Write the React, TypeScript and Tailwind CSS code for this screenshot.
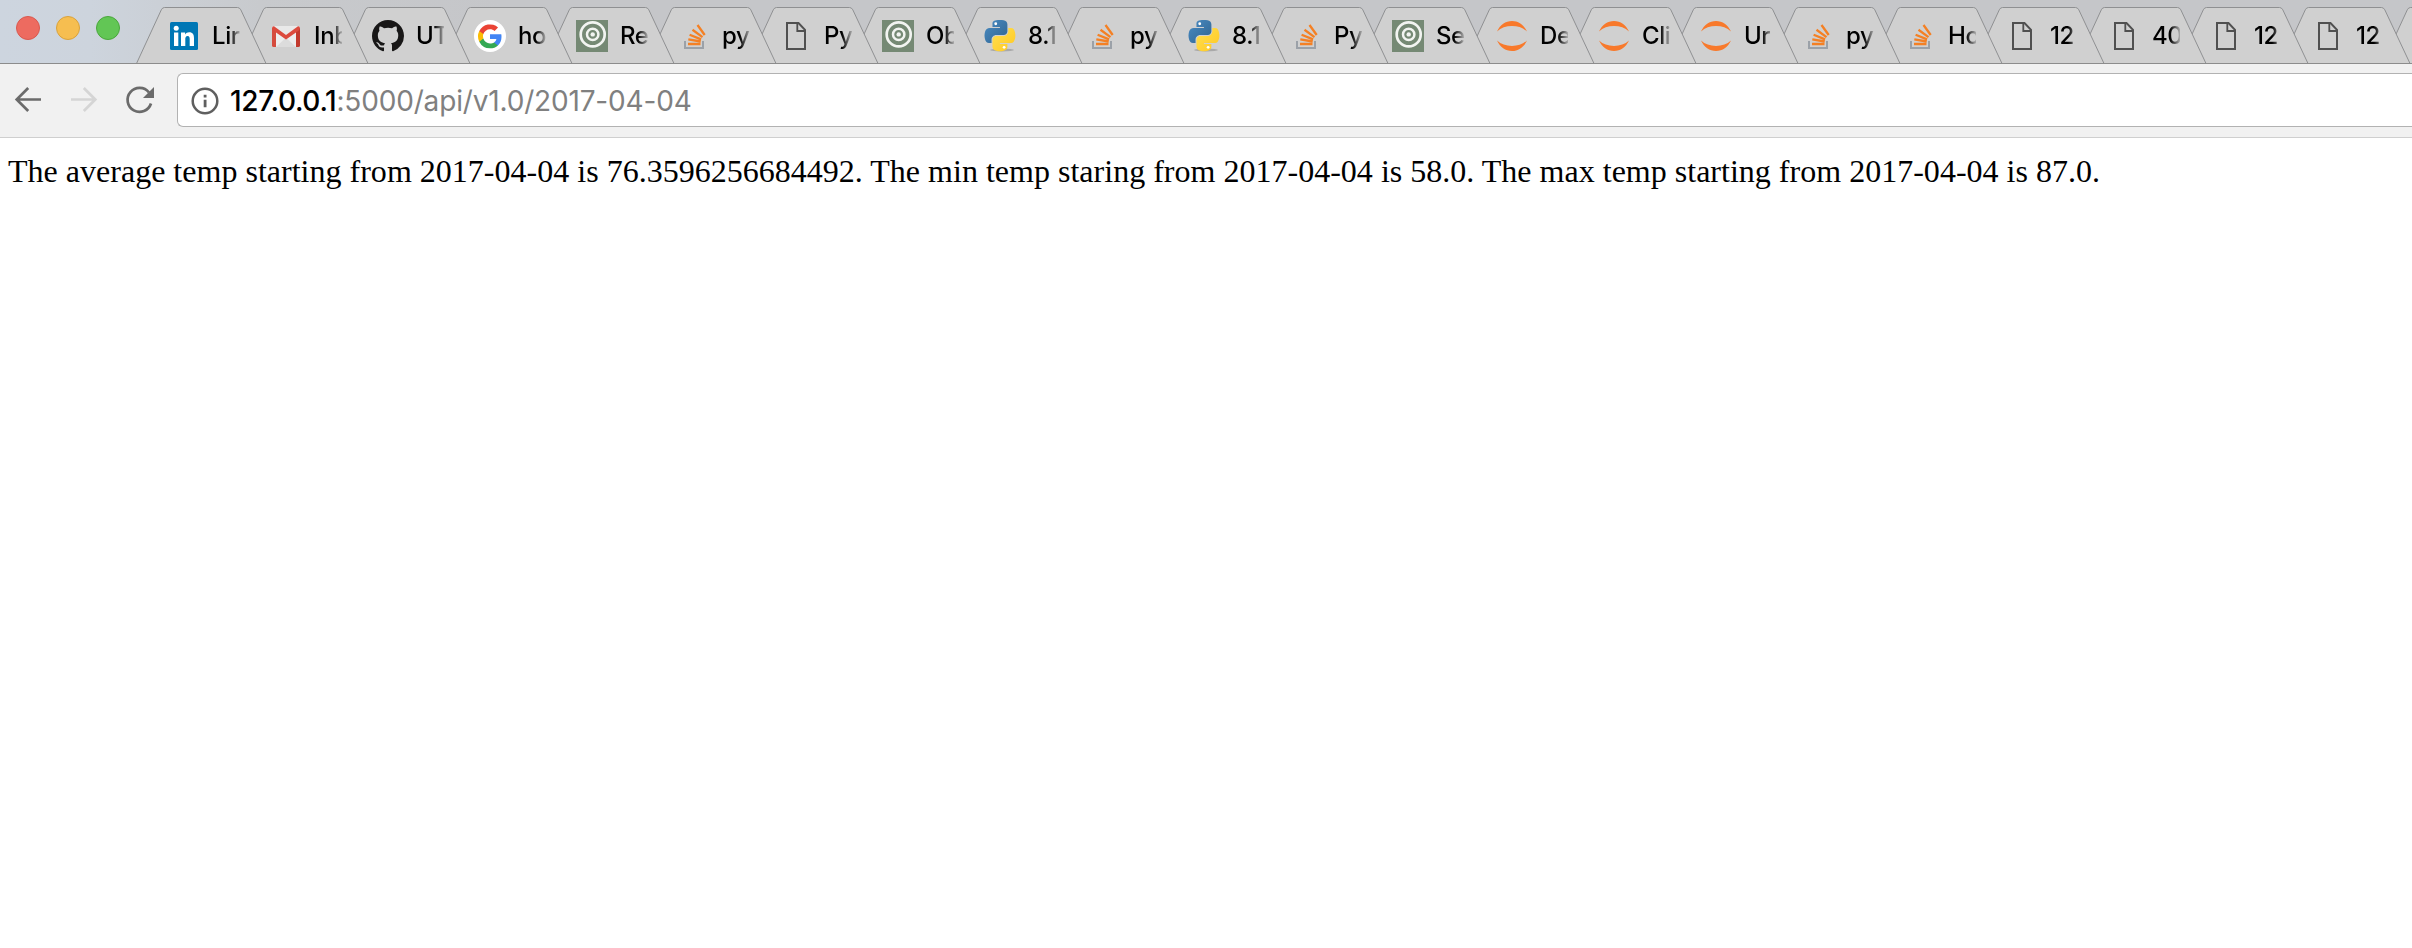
import React from "react";

type IconKind = "linkedin" | "gmail" | "github" | "google" | "rings" | "stack" | "file" | "python" | "jupyter";

const tabs: { icon: IconKind; label: string }[] = [
  { icon: "linkedin", label: "Lir" },
  { icon: "gmail", label: "Inb" },
  { icon: "github", label: "UT" },
  { icon: "google", label: "ho" },
  { icon: "rings", label: "Re" },
  { icon: "stack", label: "py" },
  { icon: "file", label: "Py" },
  { icon: "rings", label: "Ob" },
  { icon: "python", label: "8.1" },
  { icon: "stack", label: "py" },
  { icon: "python", label: "8.1" },
  { icon: "stack", label: "Py" },
  { icon: "rings", label: "Se" },
  { icon: "jupyter", label: "De" },
  { icon: "jupyter", label: "Cli" },
  { icon: "jupyter", label: "Ur" },
  { icon: "stack", label: "py" },
  { icon: "stack", label: "Ho" },
  { icon: "file", label: "12" },
  { icon: "file", label: "40" },
  { icon: "file", label: "12" },
  { icon: "file", label: "12" },
];

function TabIcon({ kind }: { kind: IconKind }) {
  const cls = "block size-8 shrink-0";
  switch (kind) {
    case "linkedin":
      return (
        <svg className={cls} viewBox="0 0 32 32">
          <rect x="2" y="2" width="28" height="28" rx="1.5" fill="#0077b5" />
          <circle cx="8.2" cy="8.3" r="2.5" fill="#fff" />
          <path d="M6 12.5h4.3V26H6zM13 12.5h4.1v1.9c.9-1.5 2.3-2.2 4-2.2 3.9 0 4.9 2.5 4.9 6V26h-4.3v-6.900c0-1.800-.3-3.200-2.100-3.200s-2.300 1.300-2.300 3.200V26H13z" fill="#fff" />
        </svg>
      );
    case "gmail":
      return (
        <svg className={cls} viewBox="0 0 32 32">
          <rect x="2" y="6" width="28" height="21" rx="1.5" fill="#e9e9e9" />
          <path d="M6 27 16 17l10 10z" fill="#dcdcdc" />
          <path d="M6 10v17l10-9 10 9V10l-10 8z" fill="#f1f1f1" opacity=".5" />
          <path d="M2 8h4v19H3.500Q2 27 2 25.500z" fill="#d54b3d" />
          <path d="M26 8h4v17.500Q30 27 28.500 27H26z" fill="#c23a2e" />
          <path d="M2 8.500Q2 6 4 6.200L16 15 28 6.200q2-.2 2 2.300L28.800 10.500 16 19.500 3.200 10.500z" fill="#dc4a3d" />
        </svg>
      );
    case "github":
      return (
        <svg className={cls} viewBox="0 0 16 16">
          <path fill="#181717" d="M8 0C3.580 0 0 3.580 0 8c0 3.540 2.290 6.530 5.470 7.590.4.070.55-.17.55-.38 0-.19-.01-.82-.01-1.490-2.010.37-2.530-.49-2.690-.94-.09-.23-.48-.94-.82-1.130-.28-.15-.68-.52-.01-.53.63-.01 1.080.58 1.230.82.72 1.210 1.870.87 2.330.66.070-.52.28-.87.51-1.070-1.780-.2-3.640-.89-3.640-3.950 0-.87.31-1.590.82-2.150-.080-.2-.36-1.020.08-2.120 0 0 .67-.21 2.200.82.64-.18 1.320-.27 2-.27s1.360.09 2 .27c1.530-1.040 2.200-.82 2.200-.82.44 1.100.16 1.920.08 2.120.51.56.82 1.270.82 2.150 0 3.070-1.870 3.750-3.650 3.950.29.25.54.73.54 1.480 0 1.070-.01 1.930-.01 2.200 0 .21.15.46.55.38A8.010 8.010 0 0 0 16 8c0-4.420-3.580-8-8-8" />
        </svg>
      );
    case "google":
      return (
        <svg className={cls} viewBox="0 0 32 32">
          <circle cx="16" cy="16" r="16" fill="#fff" />
          <g transform="translate(4 4.400)">
            <path fill="#4285F4" d="M23.500 12.270c0-.81-.07-1.600-.21-2.350H12v4.600h6.450a5.520 5.520 0 0 1-2.400 3.600v3h3.870c2.270-2.080 3.580-5.150 3.580-8.850z" />
            <path fill="#34A853" d="M12 23.900c3.240 0 5.960-1.070 7.930-2.900l-3.870-3c-1.070.72-2.450 1.150-4.060 1.150-3.120 0-5.770-2.100-6.710-4.940H1.280v3.100A11.980 11.980 0 0 0 12 23.900z" />
            <path fill="#FBBC05" d="M5.290 14.200a7.200 7.200 0 0 1 0-4.540v-3.100H1.280a12 12 0 0 0 0 10.740z" />
            <path fill="#EA4335" d="M12 4.750c1.770 0 3.350.61 4.600 1.800l3.420-3.420A11.960 11.960 0 0 0 1.280 6.560l4.010 3.100C6.230 6.820 8.880 4.750 12 4.750z" />
          </g>
        </svg>
      );
    case "rings":
      return (
        <svg className={cls} viewBox="0 0 32 32">
          <rect width="32" height="32" fill="#758974" />
          <g fill="none" stroke="#f2f4f1">
            <circle cx="16.700" cy="14.400" r="12" strokeWidth="2.700" />
            <circle cx="16.700" cy="14.400" r="5.700" strokeWidth="2.500" />
          </g>
          <circle cx="16.700" cy="14.400" r="2.200" fill="#f2f4f1" />
        </svg>
      );
    case "stack":
      return (
        <svg className={cls} viewBox="0 0 32 32">
          <path d="M7 21v7h18v-7" fill="none" stroke="#9ba1a8" strokeWidth="2" />
          <g stroke="#f48024" strokeWidth="2.300">
            <path d="M10 24h12.500M10.300 19.300l12.400 2.200M11.600 14.800l11.500 4.600M14.500 9.800l10 7.300M19.500 5l7.200 10" />
          </g>
        </svg>
      );
    case "file":
      return (
        <svg className={cls} viewBox="0 0 32 32">
          <path d="M7 3h11.500l6.500 6.800V29H7z" fill="none" stroke="#505050" strokeWidth="2" />
          <path d="M17.300 3v8h7.700" fill="none" stroke="#505050" strokeWidth="1.800" />
        </svg>
      );
    case "python":
      return (
        <svg className={cls} viewBox="0 0 32 32">
          <defs>
            <linearGradient id="pyBlue" x1="0" y1="0" x2="1" y2="1">
              <stop offset="0" stopColor="#4a8cc4" />
              <stop offset="1" stopColor="#2f638f" />
            </linearGradient>
            <linearGradient id="pyYellow" x1="0" y1="0" x2="1" y2="1">
              <stop offset="0" stopColor="#ffe052" />
              <stop offset="1" stopColor="#ffc821" />
            </linearGradient>
          </defs>
          <ellipse cx="18" cy="30" rx="12" ry="1.500" fill="#909090" opacity=".6" />
          <g transform="translate(.5 0) scale(.278)">
            <path fill="url(#pyBlue)" d="M54.920 0C50.340.02 45.960.41 42.110 1.090 30.760 3.100 28.700 7.300 28.700 15.030v10.220h26.810v3.410H18.640c-7.790 0-14.620 4.680-16.750 13.590-2.460 10.210-2.570 16.590 0 27.250 1.910 7.940 6.460 13.590 14.250 13.590h9.220V70.840c0-8.850 7.660-16.660 16.750-16.660h26.780c7.450 0 13.410-6.140 13.410-13.620V15.030c0-7.270-6.130-12.730-13.410-13.940C64.280.33 59.500-.02 54.920 0z" />
            <path fill="url(#pyYellow)" d="M85.640 28.660v11.910c0 9.230-7.830 17-16.750 17H42.110c-7.340 0-13.410 6.280-13.410 13.620v25.530c0 7.270 6.320 11.540 13.410 13.620 8.490 2.500 16.630 2.950 26.780 0 6.750-1.950 13.410-5.890 13.410-13.620V86.500H55.520v-3.410H95.700c7.790 0 10.700-5.430 13.410-13.590 2.800-8.400 2.680-16.470 0-27.250-1.930-7.760-5.600-13.590-13.410-13.590z" />
            <circle cx="40.400" cy="13.400" r="5.100" fill="#fff" />
            <circle cx="70.600" cy="98.300" r="5.100" fill="#fff" />
          </g>
        </svg>
      );
    case "jupyter":
      return (
        <svg className={cls} viewBox="0 0 32 32">
          <path d="M1 11.500C4 5 9.500 1 16 1s12 4 15 10.500C27 7.800 22 6.100 16 6.100S5 7.800 1 11.500zM1 20.500C4 27 9.500 31 16 31s12-4 15-10.500c-4 3.700-9 5.400-15 5.400S5 24.200 1 20.500z" fill="#f8792b" />
        </svg>
      );
  }
}

function TabShape() {
  return (
    <svg className="absolute top-0 left-0 block h-[57px] w-[132px]" viewBox="0 0 132 57">
      <path
        d="M.5 56.500 25.300 2.800Q26.500.5 28.500.5H101.500Q103.500.5 104.800 2.800L130 56.500"
        fill="#d0d0d0"
        stroke="#8f9092"
        strokeWidth="1"
      />
    </svg>
  );
}

function Tab({ icon, label, index }: { icon: IconKind; label: string; index: number }) {
  return (
    <div
      className={`relative h-[57px] w-[132px] shrink-0 ${index === 13 ? "-ml-7" : index === 0 ? "" : "-ml-[30px]"}`}
      style={{ zIndex: 40 - index }}
    >
      <TabShape />
      <div className="relative flex h-full items-start gap-3 pt-[13px] pl-8">
        <TabIcon kind={icon} />
        <span className="w-[27.500px] text-2xl leading-8 font-[450] tracking-[-0.4px] whitespace-nowrap text-black [mask-image:linear-gradient(to_right,#000_18px,transparent_30px)]">
          {label}
        </span>
      </div>
    </div>
  );
}

function Toolbar() {
  return (
    <div className="flex h-[74px] items-start border-b border-[#cfcfcf] bg-[#f1f1f1] pt-[9px]">
      <div className="flex h-[54px] w-[177px] shrink-0 items-center">
        <svg className="block h-[54px] w-[177px]" viewBox="0 73 177 54" fill="none" strokeWidth="2.700">
          <path d="M41 99.500H17M28.200 88 16.700 99.500l11.500 11.500" stroke="#6b6b6b" />
          <path d="M71 99.500h24M83.800 88l11.500 11.500-11.500 11.500" stroke="#d5d5d5" />
          <path d="M149 92.500A12 12 0 1 0 151 103.500" stroke="#6b6b6b" />
          <path d="M154 87v11h-11z" fill="#6b6b6b" />
        </svg>
      </div>
      <div className="flex h-[54px] flex-1 items-center rounded-l-md border border-r-0 border-[#b2b2b2] bg-white pt-px pl-[13px]">
        <svg className="block size-7 shrink-0" viewBox="0 0 28 28">
          <circle cx="14" cy="14" r="12.300" fill="none" stroke="#5f5f5f" strokeWidth="2.500" />
          <path d="M12.700 12.700h2.800v7.600h-2.800zM12.700 7.800h2.800v2.800h-2.800z" fill="#5f5f5f" />
        </svg>
        <div className="mt-px ml-[11px] text-[28px] leading-8 whitespace-nowrap">
          <span className="font-[450] tracking-[-0.3px] text-black">127.0.0.1</span>
          <span className="tracking-[-0.17px] text-[#808080]">:5000/api/v1.0/2017-04-04</span>
        </div>
      </div>
    </div>
  );
}

export default function App() {
  return (
    <div className="flex h-[948px] w-full flex-col overflow-hidden bg-white font-['Inter','Liberation_Sans',sans-serif]">
      <header className="flex h-16 shrink-0 items-start overflow-hidden border-b border-[#8c8c8c] bg-[linear-gradient(to_right,#cdd5df_0px,#cdd4dd_90px,#c8cacd_260px,#c5c6c9_500px,#c5c6c9_100%)]">
        <div className="flex w-[136px] shrink-0 gap-4 pt-4 pl-4">
          <span className="size-6 rounded-full border border-[#d9594f] bg-[#ed6b60]" />
          <span className="size-6 rounded-full border border-[#d9a23c] bg-[#f6be50]" />
          <span className="size-6 rounded-full border border-[#4aa73c] bg-[#62c655]" />
        </div>
        <nav className="flex pt-[7px]">
          {tabs.map((tab, i) => (
            <Tab key={i} icon={tab.icon} label={tab.label} index={i} />
          ))}
          <div className="relative -ml-[30px] h-[57px] w-[132px] shrink-0">
            <TabShape />
          </div>
        </nav>
      </header>
      <Toolbar />
      <main className="pt-[15px] pl-2 font-['Liberation_Serif',serif] text-[32px] leading-[37px] tracking-[0.013px] whitespace-nowrap text-black">
        The average temp starting from 2017-04-04 is 76.3596256684492. The min temp staring from 2017-04-04 is 58.0. The max temp starting from 2017-04-04 is 87.0.
      </main>
    </div>
  );
}
